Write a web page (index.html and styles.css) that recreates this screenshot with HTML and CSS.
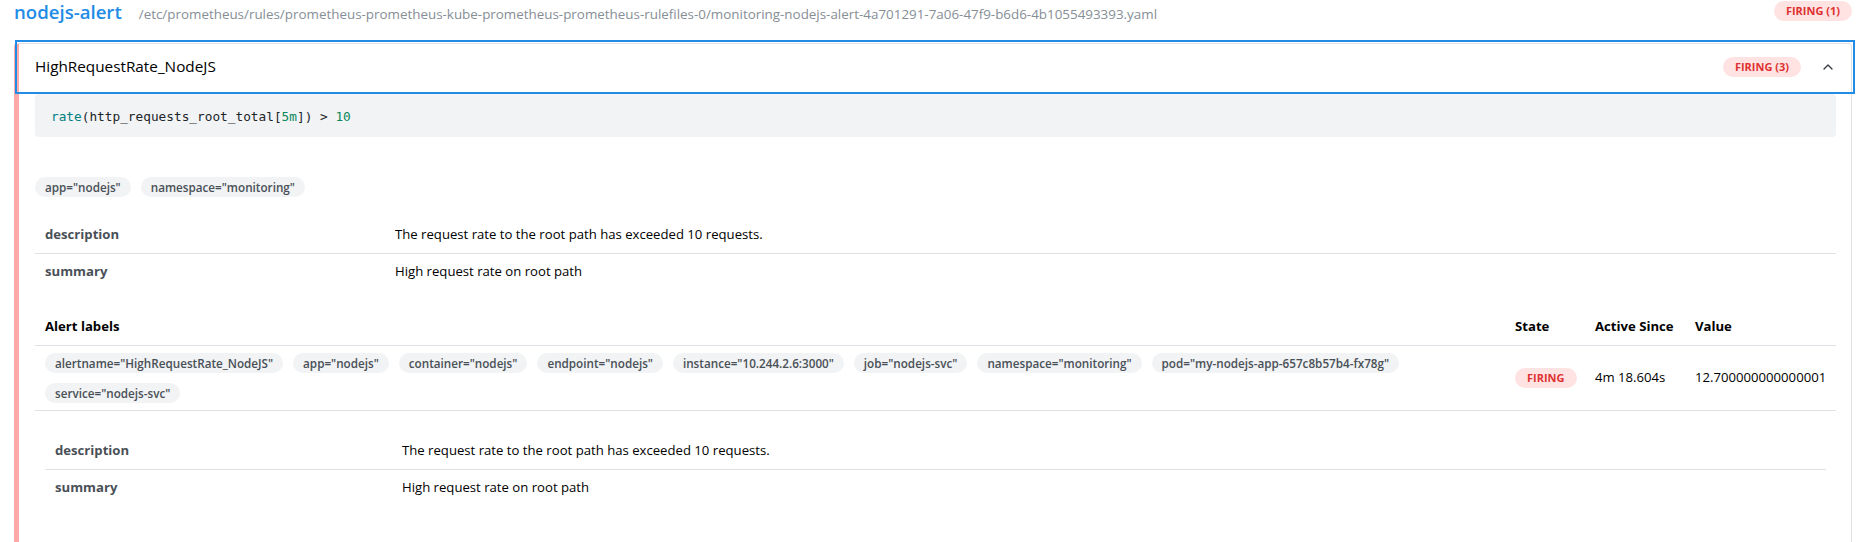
FILE: index.html
```html
<!DOCTYPE html>
<html lang="en">
<head>
<meta charset="utf-8">
<title>Alerting rules</title>
<link rel="stylesheet" href="styles.css">
</head>
<body>
<div class="page">
  <div class="group-head">
    <div class="group-title">
      <span class="group-name">nodejs-alert</span>
      <span class="group-file">/etc/prometheus/rules/prometheus-prometheus-kube-prometheus-prometheus-rulefiles-0/monitoring-nodejs-alert-4a701291-7a06-47f9-b6d6-4b1055493393.yaml</span>
    </div>
    <span class="badge badge-firing badge-group">Firing (1)</span>
  </div>

  <div class="rule">
    <div class="rule-control">
      <span class="rule-name">HighRequestRate_NodeJS</span>
      <span class="badge badge-firing">Firing (3)</span>
      <svg class="chevron" width="16" height="16" viewBox="0 0 16 16" aria-hidden="true">
        <polyline points="4,10 8,6 12,10" fill="none" stroke="#343a40" stroke-width="1.3" stroke-linecap="round" stroke-linejoin="round"/>
      </svg>
    </div>
    <div class="rule-panel">
      <pre class="expr"><code><span class="tk-fn">rate</span>(http_requests_root_total[<span class="tk-num">5m</span>]) &gt; <span class="tk-num">10</span></code></pre>

      <div class="pills rule-labels">
        <span class="pill">app="nodejs"</span>
        <span class="pill">namespace="monitoring"</span>
      </div>

      <table class="kv">
        <tbody>
          <tr><td class="kv-key">description</td><td>The request rate to the root path has exceeded 10 requests.</td></tr>
          <tr><td class="kv-key">summary</td><td>High request rate on root path</td></tr>
        </tbody>
      </table>

      <table class="alerts">
        <thead>
          <tr>
            <th class="col-labels">Alert labels</th>
            <th class="col-state">State</th>
            <th class="col-since">Active Since</th>
            <th class="col-value">Value</th>
          </tr>
        </thead>
        <tbody>
          <tr class="alert-row">
            <td>
              <div class="pills">
                <span class="pill">alertname="HighRequestRate_NodeJS"</span>
                <span class="pill">app="nodejs"</span>
                <span class="pill">container="nodejs"</span>
                <span class="pill">endpoint="nodejs"</span>
                <span class="pill">instance="10.244.2.6:3000"</span>
                <span class="pill">job="nodejs-svc"</span>
                <span class="pill">namespace="monitoring"</span>
                <span class="pill">pod="my-nodejs-app-657c8b57b4-fx78g"</span>
                <span class="pill">service="nodejs-svc"</span>
              </div>
            </td>
            <td><span class="badge badge-firing">Firing</span></td>
            <td>4m 18.604s</td>
            <td>12.700000000000001</td>
          </tr>
          <tr class="annot-row">
            <td colspan="4">
              <table class="kv kv-nested">
                <tbody>
                  <tr><td class="kv-key">description</td><td>The request rate to the root path has exceeded 10 requests.</td></tr>
                  <tr><td class="kv-key">summary</td><td>High request rate on root path</td></tr>
                </tbody>
              </table>
            </td>
          </tr>
        </tbody>
      </table>
    </div>
  </div>
</div>
</body>
</html>
```
FILE: styles.css
```css
html {
  overflow: hidden;
}

body {
  margin: 0;
  font-family: "Open Sans", "Noto Sans", sans-serif;
  font-size: 13.15px;
  line-height: 21.7px;
  color: #000;
  background: #fff;
}

.page {
  padding: 0 7px 0 14px;
}

/* group header */
.group-head {
  display: flex;
  justify-content: space-between;
  align-items: flex-start;
  height: 24px;
  margin-bottom: 19px;
}

.group-title {
  display: flex;
  align-items: baseline;
}

.group-name {
  font-size: 18.6px;
  line-height: 24px;
  font-weight: 600;
  color: #228be6;
  margin-right: 17px;
}

.group-file {
  font-size: 13.4px;
  line-height: 18px;
  color: #868e96;
}

.badge-group {
  margin-top: 1px;
}

/* badges */
.badge {
  display: inline-block;
  height: 20px;
  padding: 0 12px;
  border-radius: 1000px;
  font-size: 11px;
  line-height: 20px;
  font-weight: 700;
  text-transform: uppercase;
  white-space: nowrap;
}

.badge-firing {
  background: #ffe3e3;
  color: #e03131;
}

/* rule accordion item */
.rule {
  border: 1px solid #dee2e6;
  border-left: 5px solid #ffa8a8;
  border-radius: 4px;
}

.rule-control {
  display: flex;
  align-items: center;
  height: 46px;
  padding: 0 15px 0 16px;
  outline: 2px solid #228be6;
  outline-offset: 2px;
}

.rule-name {
  flex: 1;
  font-size: 15.3px;
  color: #000;
}

.chevron {
  display: block;
  margin-left: 19px;
}

.rule-panel {
  padding: 4px 15px 16px 16px;
}

/* expression */
.expr {
  margin: 0;
  padding: 13px 16px 11px;
  background: #f1f3f5;
  border-radius: 4px;
  font-family: "DejaVu Sans Mono", "Liberation Mono", monospace;
  font-size: 12.78px;
  line-height: 19px;
  color: #212529;
}

.tk-fn {
  color: #008080;
}

.tk-num {
  color: #09885a;
}

/* label pills */
.pills {
  display: flex;
  flex-wrap: wrap;
  gap: 10px;
}

.rule-labels {
  margin-top: 40px;
}

.pill {
  display: inline-block;
  height: 20px;
  padding: 0 10px;
  border-radius: 1000px;
  background: #f1f3f5;
  color: #495057;
  font-size: 11.7px;
  line-height: 20px;
  font-weight: 600;
  white-space: nowrap;
}

/* key / value tables */
.kv {
  width: 100%;
  margin-top: 20px;
  border-collapse: collapse;
  table-layout: fixed;
}

.kv td {
  padding: 7px 10px;
  text-align: left;
  vertical-align: middle;
}

.kv tr + tr td {
  border-top: 1px solid #dee2e6;
}

.kv .kv-key {
  width: 330px;
  font-weight: 700;
  color: #495057;
}

.kv-nested {
  margin-top: 0;
}

.kv-nested .kv-key {
  width: 327px;
}

/* alerts table */
.alerts {
  width: 100%;
  margin-top: 20px;
  border-collapse: collapse;
  table-layout: fixed;
}

.alerts th {
  padding: 7px 10px;
  text-align: left;
  font-weight: 700;
  color: #000;
  border-bottom: 1px solid #dee2e6;
}

.alerts > tbody > tr > td {
  padding: 7px 10px;
  vertical-align: middle;
}

.alerts .alert-row > td {
  border-bottom: 1px solid #dee2e6;
}

.col-state {
  width: 60px;
}

.col-since {
  width: 80px;
}

.col-value {
  width: 131px;
}

.alerts > tbody > .annot-row > td {
  padding: 22px 10px 40px;
}
```
